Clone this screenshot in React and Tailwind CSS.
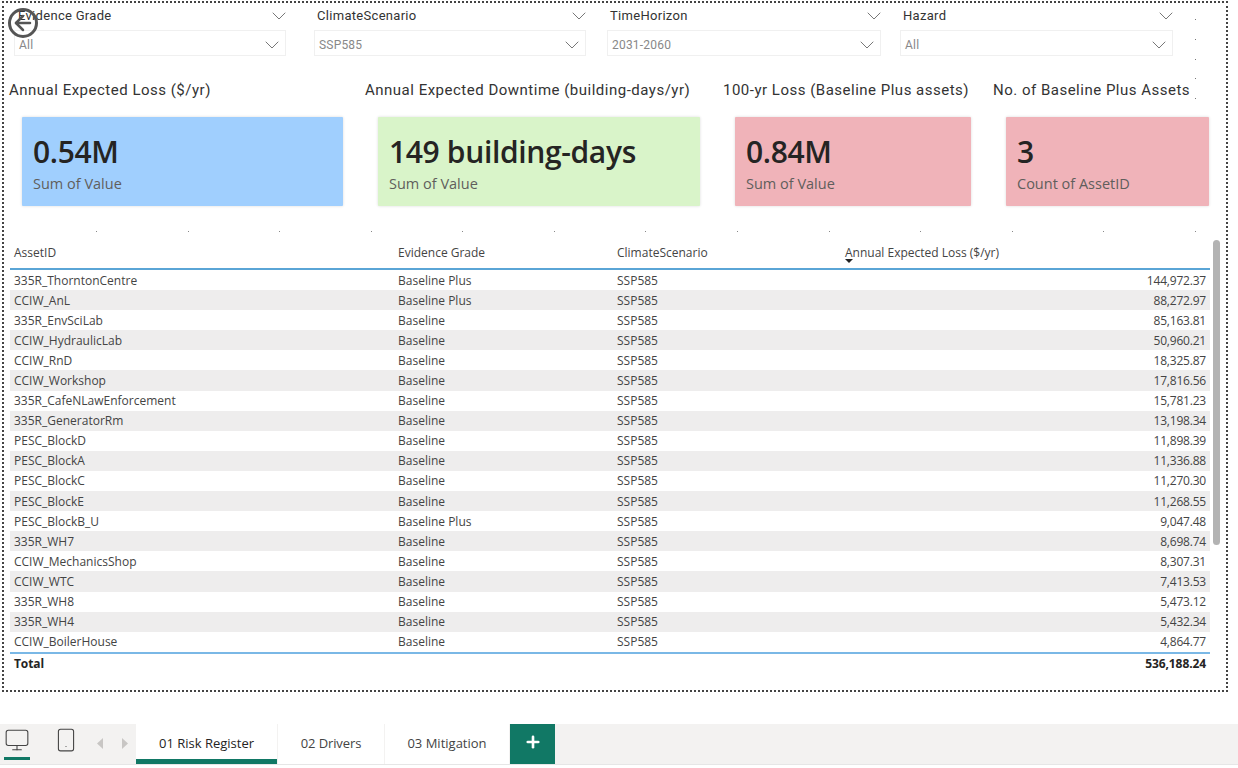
import { ChevronDown, Monitor, Smartphone, Plus, ArrowLeft } from "lucide-react";

const din = "font-['Roboto',sans-serif]";
const segoe = "font-['Open_Sans',sans-serif]";

const slicers = [
  { label: "Evidence Grade", value: "All", left: "ml-[10px]", width: "w-[272px]", labelPad: "pl-[4px]" },
  { label: "ClimateScenario", value: "SSP585", left: "ml-[28px]", width: "w-[272px]", labelPad: "pl-[3px]" },
  { label: "TimeHorizon", value: "2031-2060", left: "ml-[21px]", width: "w-[274px]", labelPad: "pl-[3px]" },
  { label: "Hazard", value: "All", left: "ml-[19px]", width: "w-[273px]", labelPad: "pl-[3px]" },
];

const cards = [
  { title: "Annual Expected Loss ($/yr)", value: "0.54M", sub: "Sum of Value", bg: "bg-[#a0cffe]", outer: "w-[356px]", card: "w-[321px] ml-[13px]" },
  { title: "Annual Expected Downtime (building-days/yr)", value: "149 building-days", sub: "Sum of Value", bg: "bg-[#d9f4c9]", outer: "w-[358px]", card: "w-[322px] ml-[13px]" },
  { title: "100-yr Loss (Baseline Plus assets)", value: "0.84M", sub: "Sum of Value", bg: "bg-[#f0b3b9]", outer: "w-[270px]", card: "w-[236px] ml-[12px]" },
  { title: "No. of Baseline Plus Assets", value: "3", sub: "Count of AssetID", bg: "bg-[#f0b3b9]", outer: "w-[220px]", card: "w-[203px] ml-[13px]" },
];

const rows = [
  ["335R_ThorntonCentre", "Baseline Plus", "144,972.37"],
  ["CCIW_AnL", "Baseline Plus", "88,272.97"],
  ["335R_EnvSciLab", "Baseline", "85,163.81"],
  ["CCIW_HydraulicLab", "Baseline", "50,960.21"],
  ["CCIW_RnD", "Baseline", "18,325.87"],
  ["CCIW_Workshop", "Baseline", "17,816.56"],
  ["335R_CafeNLawEnforcement", "Baseline", "15,781.23"],
  ["335R_GeneratorRm", "Baseline", "13,198.34"],
  ["PESC_BlockD", "Baseline", "11,898.39"],
  ["PESC_BlockA", "Baseline", "11,336.88"],
  ["PESC_BlockC", "Baseline", "11,270.30"],
  ["PESC_BlockE", "Baseline", "11,268.55"],
  ["PESC_BlockB_U", "Baseline Plus", "9,047.48"],
  ["335R_WH7", "Baseline", "8,698.74"],
  ["CCIW_MechanicsShop", "Baseline", "8,307.31"],
  ["CCIW_WTC", "Baseline", "7,413.53"],
  ["335R_WH8", "Baseline", "5,473.12"],
  ["335R_WH4", "Baseline", "5,432.34"],
  ["CCIW_BoilerHouse", "Baseline", "4,864.77"],
];

function Slicer({ label, value, left, width, labelPad }) {
  return (
    <div className={`${left} ${width} shrink-0`}>
      <div className={`flex items-center justify-between h-[26px] pb-[2px] ${labelPad}`}>
        <span className={`${din} text-[13px] tracking-[0.3px] text-[#333]`}>{label}</span>
        <ChevronDown className="w-[24px] h-[24px] -mr-[5px] text-[#777]" strokeWidth={1} />
      </div>
      <div className="flex items-start justify-between h-[26px] pl-[4px] pt-[1px] border border-[#f0f0f0]">
        <span className={`${din} text-[12px] leading-[26px] tracking-[0.2px] text-[#888]`}>{value}</span>
        <ChevronDown className="w-[26px] h-[24px] mt-[1px] text-[#777]" strokeWidth={1} />
      </div>
    </div>
  );
}

function Kpi({ title, value, sub, bg, outer, card }) {
  return (
    <div className={`${outer} shrink-0`}>
      <div className={`${din} text-[15px] tracking-[0.5px] leading-[20px] text-[#333] whitespace-nowrap`}>{title}</div>
      <div className={`${card} ${bg} mt-[17px] h-[89px] rounded-[1px] pl-[11px] pt-[16px] shadow-[0_0_3px_rgba(0,0,0,0.15)]`}>
        <div className={`${segoe} text-[30px] leading-[38px] font-semibold tracking-[-0.35px] text-[#252423] whitespace-nowrap`}>{value}</div>
        <div className={`${segoe} text-[14.5px] leading-[20px] mt-[3px] text-[#605e5c]`}>{sub}</div>
      </div>
    </div>
  );
}

export default function App() {
  return (
    <div className="w-[1238px] h-[768px] bg-white flex flex-col overflow-hidden">
      <div className="relative mt-[1px] ml-[2px] w-[1226px] h-[691px] border-2 border-dotted border-[#444] shrink-0 box-border">
        {/* back button sits over the first slicer */}
        <div className="absolute left-[4px] top-[5px] w-[30px] h-[30px] rounded-full border-[3px] border-[#555] flex items-center justify-center">
          <ArrowLeft className="w-[24px] h-[24px] text-[#555]" strokeWidth={2.5} />
        </div>

        {/* resize dots */}
        <div className="absolute left-[1191px] top-[16px] h-[80px] flex flex-col justify-between">
          {[0, 1, 2, 3, 4].map((i) => (
            <span key={i} className="block w-[1px] h-[1px] bg-[#777]" />
          ))}
        </div>

        <div className="flex pt-[1px]">
          {slicers.map((s) => (
            <Slicer key={s.label} {...s} />
          ))}
        </div>

        <div className="flex pl-[5px] pt-[24px]">
          {cards.map((c) => (
            <Kpi key={c.title} {...c} />
          ))}
        </div>

        <div className="flex justify-between pl-[92px] pr-[30px] mt-[25px] h-[1px]">
          {[...Array(13)].map((_, i) => (
            <span key={i} className="block w-[1px] h-[1px] bg-[#888]" />
          ))}
        </div>

        {/* table */}
        <div className="relative ml-[6px] mt-[7px] w-[1200px]">
          <div className={`${segoe} flex h-[31px] items-center pb-[1px] text-[12px] text-[#444] border-b-2 border-[#5aa5d6]`}>
            <span className="w-[388px] pl-[4px]">AssetID</span>
            <span className="w-[219px]">Evidence Grade</span>
            <span className="w-[228px]">ClimateScenario</span>
            <span className="relative">
              Annual Expected Loss ($/yr)
              <span className="absolute left-0 top-[15px] w-0 h-0 border-x-[4px] border-x-transparent border-t-[4px] border-t-[#222]" />
            </span>
          </div>
          {rows.map((r, i) => (
            <div
              key={r[0]}
              className={`${segoe} flex h-[20.1px] items-center pt-[1px] text-[12px] text-[#444] ${i % 2 === 1 ? "bg-[#eeeded]" : ""}`}
            >
              <span className="w-[388px] pl-[4px]">{r[0]}</span>
              <span className="w-[219px]">{r[1]}</span>
              <span className="w-[228px]">SSP585</span>
              <span className="flex-1 text-right pr-[4px] tracking-[-0.2px]">{r[2]}</span>
            </div>
          ))}
          <div className={`${segoe} flex h-[23px] items-center text-[12px] font-bold tracking-[-0.1px] text-[#252423] border-t-2 border-[#7ab8e6]`}>
            <span className="flex-1 pl-[4px]">Total</span>
            <span className="pr-[4px]">536,188.24</span>
          </div>
          {/* scrollbar overlays the table's right edge */}
          <div className="absolute left-[1203px] top-[1px] w-[7px] h-[305px] rounded-[4px] bg-[#b3b3b3]" />
        </div>
      </div>

      <div className="mt-[32px] h-[40px] bg-[#f3f2f1] flex items-stretch shrink-0 border-b border-[#e6e6e6] box-content">
        <div className="w-[136px] flex shrink-0 items-start">
          <div className="w-[32px] ml-[1px] flex flex-col items-center pt-[3px]">
            <Monitor className="w-[26px] h-[26px] text-[#444]" strokeWidth={1} />
            <span className="block w-[26px] h-[3px] mt-[4px] bg-[#117865]" />
          </div>
          <Smartphone className="w-[26px] h-[26px] mt-[3px] ml-[20px] text-[#444]" strokeWidth={1} />
          <svg className="w-[6px] h-[11px] mt-[14px] ml-[18px]" viewBox="0 0 6 11">
            <polygon points="6,0 6,11 0,5.5" fill="#c8c6c4" />
          </svg>
          <svg className="w-[6px] h-[11px] mt-[14px] ml-[19px]" viewBox="0 0 6 11">
            <polygon points="0,0 6,5.5 0,11" fill="#c8c6c4" />
          </svg>
        </div>
        <div className={`${segoe} w-[141px] bg-white flex items-center justify-center text-[13px] text-[#252423] border-b-[5px] border-[#117865] pt-[5px]`}>
          01 Risk Register
        </div>
        <div className={`${segoe} ml-[1px] w-[106px] bg-white flex items-center justify-center text-[13px] tracking-[-0.1px] text-[#444]`}>
          02 Drivers
        </div>
        <div className={`${segoe} ml-[1px] w-[124px] bg-white flex items-center justify-center text-[13px] text-[#444]`}>
          03 Mitigation
        </div>
        <div className="ml-[1px] w-[45px] bg-[#117865] flex items-center justify-center pb-[4px]">
          <Plus className="w-[18px] h-[18px] text-white" strokeWidth={3.5} />
        </div>
      </div>
    </div>
  );
}
